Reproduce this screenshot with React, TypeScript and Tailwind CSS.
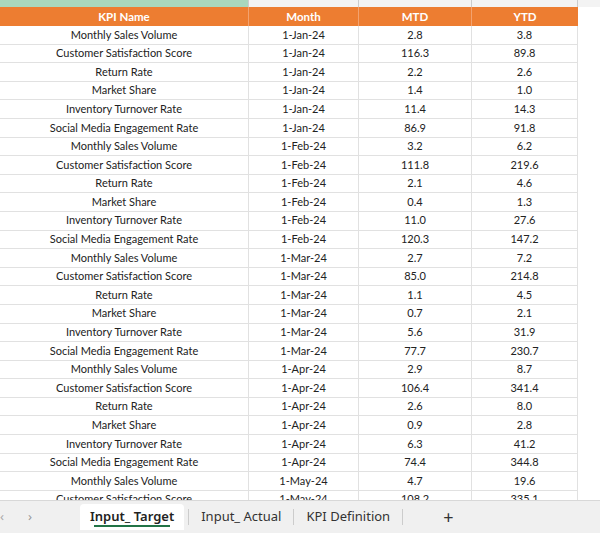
const names=["Monthly Sales Volume","Customer Satisfaction Score","Return Rate","Market Share","Inventory Turnover Rate","Social Media Engagement Rate"];
const months=["1-Jan-24","1-Feb-24","1-Mar-24","1-Apr-24","1-May-24"];
const vals=[["2.8","3.8"],["116.3","89.8"],["2.2","2.6"],["1.4","1.0"],["11.4","14.3"],["86.9","91.8"],["3.2","6.2"],["111.8","219.6"],["2.1","4.6"],["0.4","1.3"],["11.0","27.6"],["120.3","147.2"],["2.7","7.2"],["85.0","214.8"],["1.1","4.5"],["0.7","2.1"],["5.6","31.9"],["77.7","230.7"],["2.9","8.7"],["106.4","341.4"],["2.6","8.0"],["0.9","2.8"],["6.3","41.2"],["74.4","344.8"],["4.7","19.6"],["108.2","335.1"]];
export default function App(){
  const cell="flex items-center justify-center border-r border-b border-[#e1e1e1]";
  return <div className="w-[600px] h-[533px] bg-white overflow-hidden flex flex-col text-[11px] text-[#222]" style={{fontFamily:"Lato, 'Open Sans', sans-serif"}}>
    <div className="h-[500px] overflow-hidden flex flex-col">
      <div className="flex h-[7px] shrink-0 overflow-hidden">
        <div className="w-[249px] bg-[#a9d7bd] border-r border-[#ccc]"/>
        <div className="w-[110px] bg-[#f3f3f3] border-r border-[#ccc]"/>
        <div className="w-[113px] bg-[#f3f3f3] border-r border-[#ccc]"/>
        <div className="w-[106px] bg-[#f3f3f3] border-r border-[#ccc]"/>
        <div className="flex-1 bg-[#f3f3f3]"/>
      </div>
      <div className="flex h-[19px] shrink-0">
        <div className="w-[578px] flex bg-[#ed7d31] text-white font-bold text-[11.5px]">
          <div className="w-[249px] flex items-center justify-center border-r border-[#f3a26f]">KPI Name</div>
          <div className="w-[110px] flex items-center justify-center border-r border-[#f3a26f]">Month</div>
          <div className="w-[113px] flex items-center justify-center border-r border-[#f3a26f]">MTD</div>
          <div className="w-[106px] flex items-center justify-center">YTD</div>
        </div>
      </div>
      {vals.map((v,i)=><div key={i} className="flex h-[18.6px] shrink-0">
        <div className={"w-[249px] "+cell}>{names[i%6]}</div>
        <div className={"w-[110px] "+cell}>{months[Math.floor(i/6)]}</div>
        <div className={"w-[113px] "+cell}>{v[0]}</div>
        <div className={"w-[106px] "+cell}>{v[1]}</div>
      </div>)}
    </div>
    <div className="h-[33px] bg-[#f0f0f0] border-t border-[#d8d8d8] flex items-center text-[13px] text-[#333]" style={{fontFamily:"'Noto Sans', sans-serif"}}>
      <span className="text-[#aaa] w-[28px]">‹</span>
      <span className="text-[#999] w-[52px]">›</span>
      <div className="bg-white h-[26px] px-[10px] flex flex-col items-center justify-center rounded-t font-semibold text-[#222]">
        <span className="leading-[18px]">Input_ Target</span>
        <div className="h-[2px] w-[76px] bg-[#217346]"/>
      </div>
      <span className="mx-[4px] w-px h-[16px] bg-[#ccc]"/>
      <span className="px-[8px]">Input_ Actual</span>
      <span className="mx-[4px] w-px h-[16px] bg-[#ccc]"/>
      <span className="px-[8px]">KPI Definition</span>
      <span className="mx-[4px] w-px h-[16px] bg-[#ccc]"/>
      <span className="ml-[36px] text-[18px]">+</span>
    </div>
  </div>;
}
